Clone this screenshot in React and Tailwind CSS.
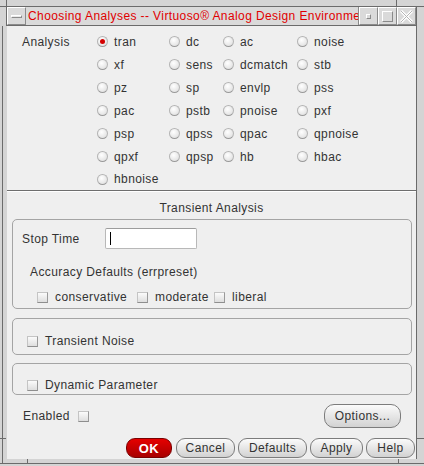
import React from "react";

const rows = [
  ["tran", "dc", "ac", "noise"],
  ["xf", "sens", "dcmatch", "stb"],
  ["pz", "sp", "envlp", "pss"],
  ["pac", "pstb", "pnoise", "pxf"],
  ["psp", "qpss", "qpac", "qpnoise"],
  ["qpxf", "qpsp", "hb", "hbac"],
  ["hbnoise"],
];

const Radio = ({ label, checked }) => (
  <div className="flex items-center gap-[6px]">
    <span className="w-[11px] h-[11px] rounded-full border border-[#b4b4b4] border-b-[#9a9a9a] bg-[radial-gradient(circle_at_40%_35%,#ffffff,#dadada)] flex items-center justify-center">
      {checked && <span className="w-[5px] h-[5px] rounded-full bg-[#d40000]" />}
    </span>
    <span>{label}</span>
  </div>
);

const Check = ({ label, className = "" }) => (
  <div className={`flex items-center gap-[7px] h-[16px] ${className}`}>
    <span className="w-[11px] h-[11px] border border-[#c4c4c4] border-b-[#8e8e8e] border-r-[#9a9a9a] bg-gradient-to-b from-[#fbfbfb] to-[#dedede]" />
    {label && <span>{label}</span>}
  </div>
);

const Btn = ({ children, className = "" }) => (
  <button
    className={`h-[20px] rounded-[9px] border border-[#7c7c7c] bg-gradient-to-b from-[#fbfbfb] to-[#d2d2d2] text-[12px] tracking-[0.4px] text-[#333] leading-none ${className}`}
  >
    {children}
  </button>
);

const Bevel = ({ className = "", children }) => (
  <div
    className={`h-full border-t border-l border-t-white border-l-white border-b border-r border-b-[#8a8a8a] border-r-[#8a8a8a] flex items-center justify-center ${className}`}
  >
    {children}
  </div>
);

export default function App() {
  return (
    <div className="w-[424px] h-[466px] bg-[#d4d4d4] flex flex-col overflow-hidden font-['Liberation_Sans',Arial,sans-serif] text-[12px] tracking-[0.4px] text-[#333]">
      {/* frame top */}
      <div className="h-[6px] flex shrink-0">
        <div className="w-[6px]" />
        <div className="w-[391px] border-l border-r border-[#6b6b6b]" />
      </div>
      {/* title bar */}
      <div className="h-[20px] shrink-0 flex border-t border-[#6b6b6b]">
        <div className="w-[6px]" />
        <div className="w-[411px] flex border-l border-r border-b border-[#6b6b6b] bg-[#dadada]">
          <Bevel className="w-[19px]">
            <span className="w-[11px] h-[3px] bg-[#e8e8e8] border border-[#8a8a8a] border-t-white border-l-white" />
          </Bevel>
          <div className="flex-1 overflow-hidden whitespace-nowrap text-[#e00000] text-[12px] tracking-[0.4px] pl-[2px] leading-[18px] border-r border-[#8a8a8a]">
            Choosing Analyses -- Virtuoso® Analog Design Environment (1)
          </div>
          <Bevel className="w-[19px]">
            <span className="w-[5px] h-[5px] border border-[#8a8a8a] border-t-white border-l-white" />
          </Bevel>
          <Bevel className="w-[19px]">
            <span className="w-[11px] h-[11px] border border-[#8a8a8a] border-t-white border-l-white" />
          </Bevel>
          <Bevel className="w-[19px]">
            <svg width="13" height="13" viewBox="0 0 13 13">
              <path d="M1 1 L12 12 M12 1 L1 12" stroke="#ffffff" strokeWidth="3" />
              <path d="M1 1 L12 12 M12 1 L1 12" stroke="#b4b4b4" strokeWidth="1" />
            </svg>
          </Bevel>
        </div>
      </div>

      {/* middle */}
      <div className="flex-1 flex min-h-0">
        <div className="w-[7px] flex flex-col">
          <div className="flex-1 ml-[2px] border-l border-[#6b6b6b]" />
          <div className="h-[1px] w-[6px] bg-[#6b6b6b]" />
          <div className="h-[20px] ml-[2px] border-l border-[#6b6b6b]" />
        </div>

        {/* content */}
        <div className="w-[409px] bg-[#efefef] flex flex-col">
          <div className="pt-[4px] pl-[15px] grid grid-cols-[75px_72px_54px_74px_1fr]">
            {rows.map((r, i) => (
              <React.Fragment key={i}>
                <div className={`flex items-center ${i === 6 ? "h-[22px]" : "h-[23px]"}`}>
                  {i === 0 ? "Analysis" : ""}
                </div>
                {[0, 1, 2, 3].map((c) => (
                  <div key={c} className={`flex items-center ${i === 6 ? "h-[22px]" : "h-[23px]"}`}>
                    {r[c] && <Radio label={r[c]} checked={r[c] === "tran"} />}
                  </div>
                ))}
              </React.Fragment>
            ))}
          </div>

          <div className="border-t border-t-[#6e6e6e] border-b border-b-white" />

          <div className="mt-[8px] h-[16px] leading-[16px] text-center">Transient Analysis</div>

          <div className="mt-[3px] ml-[5px] mr-[4px] h-[90px] rounded-[5px] border border-[#a4a4a4] pt-[8px] pl-[9px] flex flex-col">
            <div className="flex items-center h-[21px]">
              <span className="w-[83px]">Stop Time</span>
              <div className="w-[92px] h-[21px] bg-white border border-[#b8b8b8] border-t-[#9c9c9c] rounded-[2px] flex items-center">
                <span className="ml-[4px] w-[1px] h-[13px] bg-black" />
              </div>
            </div>
            <div className="mt-[15px] ml-[8px] h-[16px] leading-[16px]">Accuracy Defaults (errpreset)</div>
            <div className="mt-[9px] ml-[15px] flex">
              <Check label="conservative" className="w-[100px]" />
              <Check label="moderate" className="w-[77px]" />
              <Check label="liberal" />
            </div>
          </div>

          <div className="mt-[9px] ml-[5px] mr-[4px] h-[37px] rounded-[5px] border border-[#a4a4a4] pt-[14px] pl-[14px]">
            <Check label="Transient Noise" />
          </div>

          <div className="mt-[8px] ml-[5px] mr-[4px] h-[32px] rounded-[5px] border border-[#a4a4a4] pt-[13px] pl-[14px]">
            <Check label="Dynamic Parameter" />
          </div>

          <div className="mt-[9px] h-[24px] pl-[16px] pr-[15px] flex items-center">
            <span>Enabled</span>
            <Check className="ml-[8px]" />
            <Btn className="ml-auto w-[77px] h-[24px] rounded-[10px]">Options...</Btn>
          </div>

          <div className="mt-[10px] pr-[1px] flex justify-end gap-[3px]">
            <button className="h-[20px] w-[46px] rounded-[9px] border border-[#7a0000] bg-gradient-to-b from-[#e60000] to-[#a80000] text-white font-bold text-[13px] tracking-[0.5px] leading-none mr-[1px]">
              OK
            </button>
            <Btn className="w-[59px]">Cancel</Btn>
            <Btn className="w-[69px]">Defaults</Btn>
            <Btn className="w-[53px]">Apply</Btn>
            <Btn className="w-[49px]">Help</Btn>
          </div>
        </div>

        <div className="w-[8px] flex flex-col border-l border-[#6b6b6b]">
          <div className="flex-1" />
          <div className="h-[1px] bg-[#6b6b6b]" />
          <div className="h-[20px]" />
        </div>
      </div>

      {/* frame bottom */}
      <div className="h-[7px] shrink-0 flex flex-col">
        <div className="h-[4px] flex">
          <div className="w-[25px] ml-[2px] border-l border-[#6b6b6b]" />
          <div className="w-[372px] border-l border-r border-[#6b6b6b]" />
        </div>
        <div className="h-[1px] bg-[#6b6b6b]" />
      </div>
    </div>
  );
}
